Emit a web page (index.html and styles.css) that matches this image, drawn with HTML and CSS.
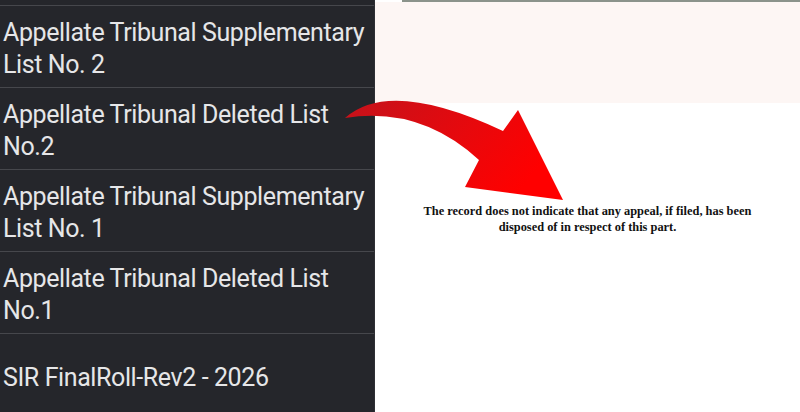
FILE: index.html
```html
<!DOCTYPE html>
<html lang="en">
<head>
  <meta charset="UTF-8">
  <title>Electoral Roll Lists</title>
  <link rel="stylesheet" href="styles.css">
</head>
<body>

<div class="menu">
  <div class="menu-top"></div>
  <div class="menu-item">Appellate Tribunal Supplementary List No. 2</div>
  <div class="menu-item">Appellate Tribunal Deleted List No.2</div>
  <div class="menu-item">Appellate Tribunal Supplementary List No. 1</div>
  <div class="menu-item">Appellate Tribunal Deleted List No.1</div>
  <div class="menu-item single">SIR FinalRoll-Rev2 - 2026</div>
</div>

<div class="viewer">
  <div class="topline"></div>
  <div class="banner"></div>
  <p class="note">
    The record does not indicate that any appeal, if filed, has been<br>
    disposed of in respect of this part.
  </p>
</div>

<!-- red pointer arrow drawn over both panes -->
<svg class="arrow" width="800" height="412" viewBox="0 0 800 412">
  <defs>
    <linearGradient id="redFade" x1="0" y1="0" x2="1" y2="0.4">
      <stop offset="0" stop-color="#c4121b"/>
      <stop offset="0.6" stop-color="#e8080c"/>
      <stop offset="1" stop-color="#ff0000"/>
    </linearGradient>
  </defs>
  <path d="M345,118 Q390,78 503,131 L518,110 L563,200 L465,187 L479,160 Q420,106 345,118 Z" fill="url(#redFade)"/>
</svg>

</body>
</html>
```

FILE: styles.css
```css
body {
  margin: 0;
  width: 800px;
  height: 412px;
  overflow: hidden;
  display: flex;
  background: #fff;
  font-family: Roboto, "Liberation Sans", sans-serif;
}

.menu {
  width: 375px;
  flex-shrink: 0;
  background: #25262b;
  border-right: 1px solid #2e2f34;
  box-sizing: border-box;
}

.menu-top {
  height: 5px;
  border-bottom: 1px solid #46474c;
}

.menu-item {
  padding: 11px 4px 6px 3px;
  min-height: 64px;
  font-size: 25px;
  line-height: 32px;
  letter-spacing: -0.4px;
  color: #e6e6e8;
  border-bottom: 1px solid #46474c;
}

.menu-item.single {
  padding-top: 28px;
  border-bottom: none;
}

.viewer {
  flex: 1;
  display: flex;
  flex-direction: column;
}

.topline {
  height: 2px;
  margin-left: 27px;
  background: #8b938b;
}

.banner {
  height: 101px;
  background: #fdf6f4;
}

.note {
  margin: 101px 0 0;
  text-align: center;
  font-family: "Liberation Serif", "Times New Roman", serif;
  font-weight: bold;
  font-size: 12.4px;
  line-height: 15.5px;
  color: #111;
}

.arrow {
  position: absolute;
  left: 0;
  top: 0;
  pointer-events: none;
}
```
